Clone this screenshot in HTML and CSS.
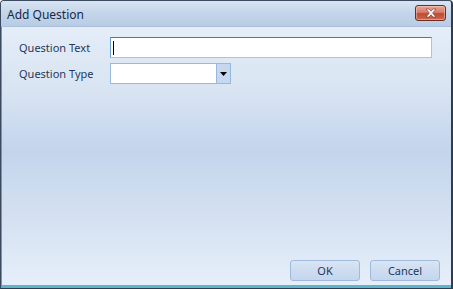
FILE: index.html
```html
<!DOCTYPE html>
<html>
<head>
<meta charset="utf-8">
<link rel="stylesheet" href="styles.css">
</head>
<body>
<div class="window">
  <div class="titlebar">
    <span class="title">Add Question</span>
    <button class="close" aria-label="Close">
      <svg width="14" height="10" viewBox="0 0 14 10">
        <path d="M2 1 L5 1 L7 3.2 L9 1 L12 1 L8.6 5 L12 9 L9 9 L7 6.8 L5 9 L2 9 L5.4 5 Z" fill="#ffffff" stroke="#7a2a22" stroke-width="0.6"/>
      </svg>
    </button>
  </div>
  <div class="client">
    <div class="form">
      <div class="row">
        <label class="label">Question Text</label>
        <div class="textbox focused"><span class="caret"></span></div>
      </div>
      <div class="row">
        <label class="label">Question Type</label>
        <div class="combo">
          <div class="combo-text"></div>
          <div class="combo-btn">
            <svg width="7" height="4" viewBox="0 0 7 4"><path d="M0 0 H7 L3.5 4 Z" fill="#000"/></svg>
          </div>
        </div>
      </div>
    </div>
    <div class="footer">
      <button class="btn">OK</button>
      <button class="btn">Cancel</button>
    </div>
  </div>
</div>
</body>
</html>
```
FILE: styles.css
```css
html, body {
  margin: 0;
  padding: 0;
  width: 453px;
  height: 289px;
  overflow: hidden;
  background: #ffffff;
}
.window {
  width: 453px;
  height: 289px;
  box-sizing: border-box;
  display: flex;
  flex-direction: column;
  border-top: 1px solid #3b4a5e;
  border-left: 1px solid #3b4a5e;
  border-right: 2px solid #2f3d52;
  border-bottom: 1px solid #2f3d52;
  border-radius: 4px 4px 0 0;
  font-family: "Noto Sans", "Open Sans", sans-serif;
  background: #c3d4ea;
}
.titlebar {
  height: 25px;
  flex: none;
  display: flex;
  align-items: center;
  justify-content: space-between;
  padding: 0 5px 0 6px;
  background: linear-gradient(#d8e4f2 0%, #c6d6ea 45%, #b8cce4 100%);
  border-bottom: 1px solid #a9bfdb;
  border-radius: 3px 3px 0 0;
}
.title {
  font-size: 12px;
  color: #15294a;
  margin-top: 1px;
}
.close {
  width: 31px;
  height: 16px;
  padding: 0;
  margin-top: -1px;
  border: 1px solid #6b2c25;
  border-radius: 3px;
  background: linear-gradient(#e8a597 0%, #d67d69 45%, #c04a32 55%, #cb6a4f 100%);
  box-shadow: inset 0 0 0 1px rgba(255,220,210,0.45);
  display: flex;
  align-items: center;
  justify-content: center;
}
.client {
  flex: 1;
  display: flex;
  flex-direction: column;
  justify-content: space-between;
  border-left: 1px solid #7b92b3;
  border-bottom: 3px solid #5cb5c9;
  background: linear-gradient(#e4edf8 0%, #d8e4f2 25%, #c3d5ec 48%, #d3e0f1 72%, #e6eefa 100%);
}
.form {
  display: flex;
  flex-direction: column;
  gap: 5px;
  padding: 10px 0 0 17px;
}
.row {
  display: flex;
  align-items: center;
}
.label {
  width: 91px;
  font-size: 11px;
  color: #1e395b;
}
.textbox {
  box-sizing: border-box;
  width: 322px;
  height: 21px;
  background: #fff;
  border: 1px solid #a8c4e4;
  border-top-color: #3d7cbc;
  border-left-color: #6d9fd2;
  display: flex;
  align-items: center;
  padding-left: 2px;
}
.caret {
  width: 1px;
  height: 14px;
  background: #000;
}
.combo {
  box-sizing: border-box;
  display: flex;
  width: 121px;
  height: 21px;
  border: 1px solid #98b8dc;
  background: #fff;
}
.combo-text {
  flex: 1;
}
.combo-btn {
  width: 13px;
  border-left: 1px solid #98b8dc;
  background: #c5d8ef;
  display: flex;
  align-items: center;
  justify-content: center;
}
.footer {
  display: flex;
  justify-content: flex-end;
  gap: 10px;
  padding: 0 11px 4px 0;
}
.btn {
  width: 70px;
  height: 21px;
  border: 1px solid #a0bad9;
  border-radius: 3px;
  background: linear-gradient(#d9e5f4 0%, #cddcf0 50%, #c4d6ee 100%);
  font-family: "Noto Sans", "Open Sans", sans-serif;
  font-size: 11px;
  color: #1e395b;
  padding: 0;
}
```
